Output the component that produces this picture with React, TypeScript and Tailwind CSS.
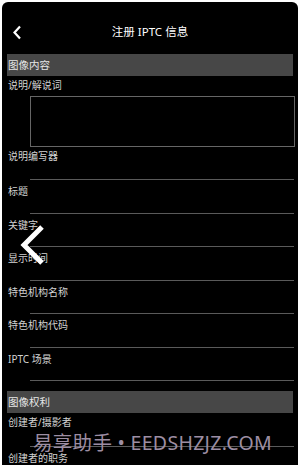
import React from "react";

const labelCls = "h-[18px] flex items-center pl-[6px] text-[10px] text-[#d2d2d2] leading-none";

function FieldRow({ label, first }: { label: string; first?: boolean }) {
  return (
    <div className={first ? "" : "pt-[2px]"}>
      <div className={labelCls}>{label}</div>
      <div className={first ? "h-[14px]" : "h-[12.5px]"} />
      <div className="ml-[28px] mr-[4px] h-px bg-[#5a5a5a]" />
    </div>
  );
}

function SectionBar({ title }: { title: string }) {
  return (
    <div className="mx-[5px] h-[22px] bg-[#474747] flex items-center pl-[1px] text-[10.5px] text-[#e6e6e6] leading-none">
      {title}
    </div>
  );
}

export default function App() {
  return (
    <div className="w-[302px] h-[465px] bg-white overflow-hidden pt-[2px] pl-[2px] pr-[4px] font-['Noto_Sans','Noto_Sans_CJK_SC',sans-serif]">
      <div className="relative h-[470px] bg-black rounded-t-[6px]">
        {/* header */}
        <div className="relative h-[52px] flex items-center justify-center">
          <svg className="absolute left-[10px] top-[23px]" width="10" height="15" viewBox="0 0 10 15">
            <polyline points="8,1.5 2.5,7.5 8,13.5" fill="none" stroke="white" strokeWidth="2.2" />
          </svg>
          <span className="text-[11.5px] text-white mt-[8px]">注册 IPTC 信息</span>
        </div>

        <SectionBar title="图像内容" />
        <div className={labelCls}>说明/解说词</div>
        <div className="mt-[2px] ml-[28px] mr-[3px] h-[51px] border border-[#666]" />
        <FieldRow label="说明编写器" first />
        <FieldRow label="标题" />
        <FieldRow label="关键字" />
        <FieldRow label="显示时间" />
        <FieldRow label="特色机构名称" />
        <FieldRow label="特色机构代码" />
        <FieldRow label="IPTC 场景" />

        <div className="h-[10px]" />
        <SectionBar title="图像权利" />
        <div>
          <div className={labelCls}>创建者/摄影者</div>
          <div className="h-[14.5px]" />
          <div className="ml-[28px] mr-[4px] h-px bg-[#5a5a5a]" />
        </div>
        <div className="pt-[2px]">
          <div className={labelCls}>创建者的职务</div>
        </div>

        {/* image viewer overlay arrow */}
        <svg className="absolute left-[16px] top-[221px]" width="32" height="46" viewBox="0 0 32 46">
          <polyline points="24,4 6,22 24,40" fill="none" stroke="white" strokeWidth="5" />
        </svg>

        {/* watermark */}
        <div className="absolute left-[31px] top-[431px] text-[19.5px] leading-none text-[#9d8ea3] whitespace-nowrap tracking-[0.3px]">
          易享助手 • EEDSHZJZ.COM
        </div>
      </div>
    </div>
  );
}
